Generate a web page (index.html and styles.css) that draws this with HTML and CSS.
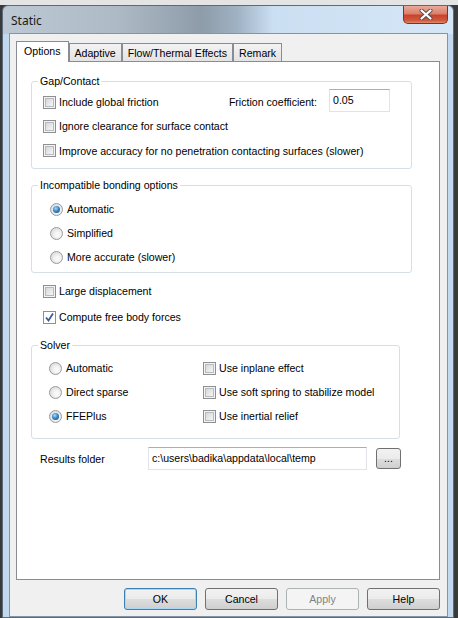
FILE: index.html
```html
<!DOCTYPE html>
<html lang="en">
<head>
  <meta charset="UTF-8">
  <title>Static</title>
  <link rel="stylesheet" href="styles.css">
</head>
<body>
  <div class="window">
    <div class="titlebar">
      <span class="title">Static</span>
      <span class="close">
        <svg width="14" height="11" viewBox="0 0 14 11">
          <path d="M2.5 1.5 L11.5 9.5 M11.5 1.5 L2.5 9.5" stroke="#4a4f57" stroke-width="4" stroke-linecap="round"/>
          <path d="M2.5 1.5 L11.5 9.5 M11.5 1.5 L2.5 9.5" stroke="#fff" stroke-width="2.2" stroke-linecap="round"/>
        </svg>
      </span>
    </div>

    <div class="client">
      <div class="tabs">
        <span class="tab active">Options</span>
        <span class="tab">Adaptive</span>
        <span class="tab">Flow/Thermal Effects</span>
        <span class="tab">Remark</span>
      </div>

      <div class="panel">
        <fieldset class="group wide">
          <legend>Gap/Contact</legend>
          <div class="rows gap-rows">
            <div class="row">
              <span class="cb"></span><span class="text">Include global friction</span>
              <span class="coef-label">Friction coefficient:</span>
              <span class="field coef">0.05</span>
            </div>
            <div class="row">
              <span class="cb"></span><span class="text">Ignore clearance for surface contact</span>
            </div>
            <div class="row last">
              <span class="cb"></span><span class="text">Improve accuracy for no penetration contacting surfaces (slower)</span>
            </div>
          </div>
        </fieldset>

        <fieldset class="group wide bonding">
          <legend>Incompatible bonding options</legend>
          <div class="rows bond-rows">
            <div class="row"><span class="rb on"></span><span class="rtext">Automatic</span></div>
            <div class="row"><span class="rb"></span><span class="rtext">Simplified</span></div>
            <div class="row"><span class="rb"></span><span class="rtext">More accurate (slower)</span></div>
          </div>
        </fieldset>

        <div class="loose">
          <div class="row tall"><span class="cb"></span><span class="text">Large displacement</span></div>
          <div class="row tall">
            <span class="cb checked">
              <svg width="11" height="11" viewBox="0 0 11 11">
                <path d="M2 5.5 L4.5 8.5 L9 1.5" fill="none" stroke="#3d5a98" stroke-width="1.8"/>
              </svg>
            </span><span class="text">Compute free body forces</span>
          </div>
        </div>

        <fieldset class="group solver">
          <legend>Solver</legend>
          <div class="rows solver-grid">
            <div class="row"><span class="rb"></span><span class="rtext">Automatic</span></div>
            <div class="row"><span class="cb"></span><span class="text">Use inplane effect</span></div>
            <div class="row"><span class="rb"></span><span class="rtext">Direct sparse</span></div>
            <div class="row"><span class="cb"></span><span class="text">Use soft spring to stabilize model</span></div>
            <div class="row"><span class="rb on"></span><span class="rtext">FFEPlus</span></div>
            <div class="row"><span class="cb"></span><span class="text">Use inertial relief</span></div>
          </div>
        </fieldset>

        <div class="results">
          <span class="results-label">Results folder</span>
          <span class="field path">c:\users\badika\appdata\local\temp</span>
          <span class="btn browse">...</span>
        </div>
      </div>

      <div class="buttons">
        <span class="btn default">OK</span>
        <span class="btn">Cancel</span>
        <span class="btn disabled">Apply</span>
        <span class="btn">Help</span>
      </div>
    </div>
  </div>
</body>
</html>
```

FILE: styles.css
```css
body {
  margin: 0;
  height: 618px;
  overflow: hidden;
  font-family: "Liberation Sans", Arial, sans-serif;
  font-size: 10.6px;
  color: #000;
  background: linear-gradient(#e4e4e4 0, #e4e4e4 5px, #3a3a3a 5px);
}

/* window frame */
.window {
  margin: 5px 4px 0 2px;
  height: 613px;
  box-sizing: border-box;
  border: 1px solid #5a6b7e;
  border-radius: 6px 6px 0 0;
  padding: 0 5px 0 6px;
  display: flex;
  flex-direction: column;
  background:
    linear-gradient(to right, #bcc8d4 0%, #aebbc7 25%, #8e9ca9 44%, #9fb1c3 52%, #cbdff2 60%, #d5e6f7 100%) top / 100% 28px no-repeat,
    #c3d9ef;
}

.titlebar {
  height: 27px;
  display: flex;
  align-items: center;
}

.title {
  padding-left: 2px;
  padding-top: 1px;
  font-family: "Noto Sans", "Liberation Sans", sans-serif;
  font-size: 12px;
  color: #1a1a1a;
}

.close {
  margin-left: auto;
  align-self: flex-start;
  width: 45px;
  height: 18px;
  box-sizing: border-box;
  border: 1px solid #7a3328;
  border-top: none;
  border-radius: 0 0 5px 5px;
  background: linear-gradient(#e9a999 0%, #dc806b 45%, #c7432b 55%, #d05a3f 85%, #e08a6d 100%);
  display: flex;
  align-items: center;
  justify-content: center;
}

/* client area */
.client {
  flex: 1;
  background: #f0f0f0;
  border: 1px solid #8593a2;
  padding: 7px 7px 6px 6px;
  display: flex;
  flex-direction: column;
}

.tabs {
  height: 20px;
  display: flex;
  align-items: flex-end;
}

.tab {
  height: 18px;
  box-sizing: border-box;
  padding: 0 5px;
  border: 1px solid #898c95;
  border-bottom: none;
  background: linear-gradient(#f3f3f3, #e3e3e3);
  display: flex;
  align-items: center;
}

.tab.active {
  height: 21px;
  margin-bottom: -1px;
  padding: 0 7px 2px;
  background: #fff;
  position: relative;
  z-index: 1;
}

.panel {
  flex: 1;
  background: #fff;
  border: 1px solid #898c95;
  padding: 12px 0 0 14px;
}

/* group boxes */
.group {
  margin: 0;
  padding: 0;
  border: 1px solid #d5dfe5;
  border-radius: 3px;
  box-sizing: border-box;
}

.group legend {
  margin-left: 6px;
  padding: 0 2px;
  line-height: 14px;
}

.wide {
  width: 381px;
}

.bonding {
  margin-top: 9px;
}

.solver {
  width: 369px;
  margin-top: 8px;
}

.row {
  height: 24px;
  display: flex;
  align-items: center;
}

.gap-rows {
  padding: 2px 21px 5px 11px;
}

.gap-rows .last {
  height: 25px;
}

.bond-rows {
  padding: 5px 0 3px 18px;
}

.solver-grid {
  padding: 4px 0 10px 17px;
  display: grid;
  grid-template-columns: 154px 1fr;
}

.loose {
  margin: 5px 0 0 12px;
}

.row.tall {
  height: 26px;
}

/* checkboxes and radios */
.cb {
  width: 13px;
  height: 13px;
  box-sizing: border-box;
  border: 1px solid #8e8f8f;
  padding: 1px;
  background: #f4f4f4;
  flex: none;
}

.cb::before {
  content: "";
  display: block;
  width: 9px;
  height: 9px;
  box-sizing: border-box;
  border: 1px solid #b6bac0;
  background: linear-gradient(135deg, #d4d7db, #f6f6f6);
}

.cb.checked {
  padding: 0;
  background: #fff;
}

.cb.checked::before {
  display: none;
}

.cb svg {
  display: block;
}

.text {
  margin-left: 3px;
}

.rb {
  width: 13px;
  height: 13px;
  box-sizing: border-box;
  border: 1px solid #9a9a9a;
  border-radius: 50%;
  background: radial-gradient(circle at 60% 60%, #f8f8f8 20%, #d6d6d6 90%);
  display: flex;
  align-items: center;
  justify-content: center;
  flex: none;
}

.rb.on::before {
  content: "";
  width: 7px;
  height: 7px;
  border-radius: 50%;
  background: radial-gradient(circle at 40% 35%, #a8dcf7 0%, #3a88c8 45%, #17457a 100%);
}

.rtext {
  margin-left: 4px;
}

/* inputs */
.field {
  height: 23px;
  box-sizing: border-box;
  border: 1px solid #e2e3ea;
  border-top-color: #abadb3;
  background: #fff;
  display: flex;
  align-items: center;
  padding: 0 3px 1px;
}

.coef-label {
  margin-left: auto;
}

.coef {
  width: 61px;
  margin-left: 12px;
  margin-bottom: 3px;
}

.results {
  margin: 8px 0 0 9px;
  height: 23px;
  display: flex;
  align-items: center;
}

.results-label {
  width: 108px;
  flex: none;
}

.path {
  width: 219px;
}

/* buttons */
.btn {
  width: 73px;
  height: 22px;
  box-sizing: border-box;
  border: 1px solid #707070;
  border-radius: 3px;
  background: linear-gradient(#f2f2f2 0%, #ebebeb 50%, #dddddd 51%, #cfcfcf 100%);
  display: flex;
  align-items: center;
  justify-content: center;
}

.btn.default {
  border-color: #3c7fb1;
  box-shadow: inset 0 0 0 1px #a7d9f5;
}

.btn.disabled {
  border-color: #adb2b5;
  background: #f4f4f4;
  color: #838383;
}

.browse {
  width: 25px;
  height: 21px;
  margin-left: 9px;
  padding-bottom: 2px;
}

.buttons {
  margin-top: 8px;
  display: flex;
  justify-content: flex-end;
  gap: 8px;
}
```
